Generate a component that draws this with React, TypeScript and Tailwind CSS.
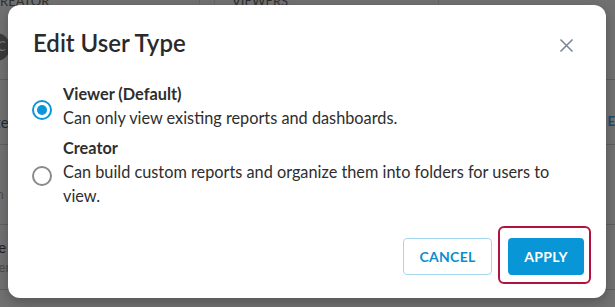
import React from "react";

const font = { fontFamily: "Lato, 'Noto Sans', sans-serif" };

function Radio({ checked }: { checked: boolean }) {
    return (
        <span
            className={
                checked
                    ? "mt-[7px] flex h-[20px] w-[20px] shrink-0 items-center justify-center rounded-full border-2 border-[#0a96d8]"
                    : "mt-[7px] flex h-[20px] w-[20px] shrink-0 items-center justify-center rounded-full border-2 border-[#8a8a8a]"
            }
        >
            {checked && <span className="h-[10px] w-[10px] rounded-full bg-[#0a96d8]" />}
        </span>
    );
}

function Option({
    title,
    text,
    checked,
}: {
    title: string;
    text: string;
    checked: boolean;
}) {
    return (
        <label className="flex items-center gap-[11px]">
            <Radio checked={checked} />
            <div className="w-[512px] text-[16.3px] leading-[24px] text-[#2e2e2e]">
                <div className="font-bold">{title}</div>
                <div>{text}</div>
            </div>
        </label>
    );
}

export default function App() {
    return (
        <div
            className="relative h-[307px] w-[615px] overflow-hidden bg-[#717171]"
            style={font}
        >
            {/* page behind the overlay */}
            <div className="flex flex-col text-[13px]">
                <div className="flex h-[15px] items-start">
                    <div className="-mt-[5px] w-[200px] border-r border-[#666] leading-[13px] text-[#2f2f2f]">
                        REATOR
                    </div>
                    <div className="h-[15px] w-[15px] border-r border-[#666]" />
                    <div className="-mt-[5px] w-[224px] border-r border-[#666] pl-[17px] leading-[13px] text-[#2f2f2f]">
                        VIEWERS
                    </div>
                </div>
                <div className="flex h-[65px] items-center border-b border-[#5f5f5f]">
                    <div className="-ml-[18px] flex h-[28px] w-[28px] items-center justify-end rounded-full bg-[#3b3b3b] pr-[4px] text-[#777]">
                        C
                    </div>
                </div>
                <div className="flex h-[65px] items-center border-b border-[#5f5f5f] pt-[20px]">
                    <span className="-ml-[12px] text-[15px] text-[#1e2b36]">ate</span>
                    <span className="ml-auto font-bold text-[#124d73]">E</span>
                </div>
                <div className="flex h-[80px] items-end border-b border-[#5f5f5f] pb-[20px]">
                    <span className="-ml-[10px] text-[#4a4a4a]">im</span>
                </div>
                <div className="flex h-[65px] flex-col justify-center border-b border-[#5f5f5f] leading-[20px]">
                    <span className="-ml-[10px] text-[15px] text-[#222]">ne</span>
                    <span className="-ml-[8px] text-[#4a4a4a]">ver</span>
                </div>
            </div>

            {/* dialog */}
            <div className="absolute left-[8px] top-[5px] flex h-[293px] w-[598px] flex-col rounded-[12px] bg-white pl-[24px] pr-[15px] pt-[23px] shadow-[0_4px_12px_rgba(0,0,0,0.25)]">
                <div className="flex items-center justify-between pl-[1px] pr-[17px]">
                    <h2 className="text-[24px] font-semibold leading-[29px] text-[#2a2a2a]">
                        Edit User Type
                    </h2>
                    <button className="mt-[5px] text-[#7b8794]">
                        <svg width="15" height="15" viewBox="0 0 15 15" fill="none">
                            <path
                                d="M1.5 1.5l12 12M13.5 1.5l-12 12"
                                stroke="currentColor"
                                strokeWidth="1.6"
                            />
                        </svg>
                    </button>
                </div>

                <div className="mt-[25px] flex flex-col gap-[6px]">
                    <Option
                        checked
                        title="Viewer (Default)"
                        text="Can only view existing reports and dashboards."
                    />
                    <Option
                        checked={false}
                        title="Creator"
                        text="Can build custom reports and organize them into folders for users to view."
                    />
                </div>

                <div className="mt-[18px] flex items-end justify-end gap-[6px]">
                    <button className="mb-[9px] h-[37px] w-[89px] rounded-[4px] border border-[#a6d7f0] text-[14px] font-bold tracking-[0.3px] text-[#0a8fd0]">
                        CANCEL
                    </button>
                    <div className="rounded-[6px] border-2 border-[#b3143f] pb-[7px] pl-[8px] pr-[5px] pt-[10px]">
                        <button className="h-[37px] w-[76px] rounded-[4px] bg-[#0996d6] text-[14px] font-bold tracking-[0.3px] text-white">
                            APPLY
                        </button>
                    </div>
                </div>
            </div>
        </div>
    );
}
